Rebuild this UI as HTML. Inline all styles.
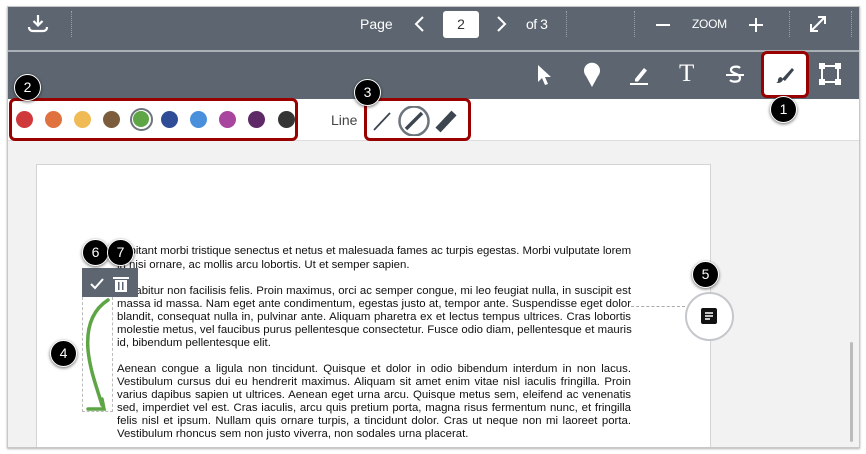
<!DOCTYPE html>
<html><head><meta charset="utf-8"><style>
*{margin:0;padding:0;box-sizing:border-box}
body{width:866px;height:454px;background:#fff;position:relative;overflow:hidden;font-family:"Liberation Sans",sans-serif}
.a{position:absolute}
.frame{left:7px;top:6px;width:853px;height:442px;background:#f2f2f2;border:1px solid #c8c8c8;overflow:hidden;box-shadow:0 1px 2px rgba(0,0,0,.3)}
.tb1{left:0;top:0;width:853px;height:43px;background:#5d6670}
.sep{left:0;top:43px;width:853px;height:2px;background:#aab0b5}
.tb2{left:0;top:45px;width:853px;height:47px;background:#5d6670}
.row{left:0;top:92px;width:853px;height:42px;background:#fff;border-bottom:1px solid #ddd}
.dv{width:0;height:26px;border-left:1px dotted #9aa1a8}
.w{color:#fff;font-size:14px}
.dot{width:17px;height:17px;border-radius:50%;top:111px}
.badge{width:27px;height:27px;border-radius:50%;background:#000;color:#fff;font-size:14px;text-align:center;line-height:25px;border:1.5px solid #fff;box-shadow:0 1px 3px rgba(0,0,0,.6)}
.red{border:3px solid #990000;border-radius:6px}
.page{left:28px;top:157px;width:675px;height:300px;background:#fff;border:1px solid #d4d4d4}
.ln{left:117px;width:514px;font-size:11.4px;line-height:13px;height:13px;color:#111;text-align:justify;text-align-last:justify;white-space:nowrap;overflow:visible}
.nl{text-align-last:left}
</style></head><body>
<div class="a frame"></div>
<div class="a" style="left:8px;top:7px;width:851px;height:440px;overflow:hidden">
 <div class="a tb1"></div><div class="a sep"></div><div class="a tb2"></div><div class="a row"></div>
 <div class="a page"></div>
 <div class="a" style="left:842px;top:335px;width:3px;height:100px;background:#bbb;border-radius:2px"></div>
</div>
<svg class="a" style="left:27px;top:14px" width="22" height="20" viewBox="0 0 22 20"><path d="M11 1v10M6.5 7l4.5 4.5L15.5 7" stroke="#fff" stroke-width="2.2" fill="none"/><path d="M2 13c0 3 2 4 4 4h10c2 0 4-1 4-4" stroke="#fff" stroke-width="2.2" fill="none"/></svg>
<div class="a dv" style="left:71px;top:11px"></div>
<div class="a w" style="left:360px;top:16px">Page</div>
<svg class="a" style="left:413px;top:15px" width="12" height="18"><path d="M10 2L3 9l7 7" stroke="#fff" stroke-width="2" fill="none"/></svg>
<div class="a" style="left:443px;top:11px;width:36px;height:27px;background:#fff;border-radius:3px;text-align:center;line-height:27px;font-size:14px;color:#333">2</div>
<svg class="a" style="left:496px;top:15px" width="12" height="18"><path d="M2 2l7 7-7 7" stroke="#fff" stroke-width="2" fill="none"/></svg>
<div class="a w" style="left:526px;top:16px;letter-spacing:-.5px">of 3</div>
<div class="a dv" style="left:566px;top:11px"></div>
<div class="a dv" style="left:634px;top:11px"></div>
<div class="a" style="left:656px;top:24px;width:14px;height:2px;background:#fff"></div>
<div class="a" style="left:692px;top:17px;color:#fff;font-size:12px;letter-spacing:-.3px">ZOOM</div>
<div class="a" style="left:749px;top:24px;width:14px;height:2px;background:#fff"></div>
<div class="a" style="left:755px;top:18px;width:2px;height:14px;background:#fff"></div>
<div class="a dv" style="left:789px;top:11px"></div>
<svg class="a" style="left:808px;top:14px" width="20" height="20"><path d="M3 17L17 3M10 3h7v7M3 10v7h7" stroke="#fff" stroke-width="2" fill="none"/></svg>
<div class="a dv" style="left:851px;top:11px"></div>
<svg class="a" style="left:535px;top:63px" width="16" height="24"><path d="M3 2v17l4-4 3 7 3-1-3-7h6z" fill="#fff"/></svg>
<svg class="a" style="left:582px;top:61px" width="20" height="28"><path d="M10 26L4 15A8 8 0 1 1 16 15z" fill="#fff"/></svg>
<svg class="a" style="left:628px;top:63px" width="22" height="24"><path d="M7 16l9-11 3 2.5-9 11H7z" fill="#fff"/><rect x="2" y="20" width="18" height="2" fill="#fff"/></svg>
<div class="a" style="left:679px;top:60px;color:#fff;font-family:'Liberation Serif',serif;font-size:25px">T</div>
<svg class="a" style="left:725px;top:63px" width="20" height="24"><path d="M15 5c-2-2-9-2-9 2s9 3 9 8-8 4-10 2" stroke="#fff" stroke-width="2.2" fill="none"/><rect x="1" y="11" width="18" height="2" fill="#fff"/></svg>
<div class="a red" style="left:761px;top:51px;width:48px;height:47px;background:#fff"></div>
<svg class="a" style="left:773px;top:65px" width="22" height="20"><path d="M9 14l10-11 2 2-9 11z" fill="#3d4650"/><path d="M2 18c2 0 3-1 3-3 0-2 2-3 3-3l2 2c0 2-2 4-5 4z" fill="#3d4650"/></svg>
<svg class="a" style="left:819px;top:63px" width="22" height="22"><rect x="3" y="3" width="16" height="16" fill="none" stroke="#fff" stroke-width="2"/><g fill="#fff"><rect x="0" y="0" width="6" height="6"/><rect x="16" y="0" width="6" height="6"/><rect x="0" y="16" width="6" height="6"/><rect x="16" y="16" width="6" height="6"/></g></svg>
<div class="a badge" style="left:770px;top:96px">1</div>
<div class="a red" style="left:9px;top:98px;width:289px;height:43px"></div>
<div class="a dot" style="left:16px;background:#d0393c"></div>
<div class="a dot" style="left:45px;background:#e0723f"></div>
<div class="a dot" style="left:74px;background:#f0bb55"></div>
<div class="a dot" style="left:103px;background:#7d5c3e"></div>
<div class="a" style="left:130px;top:108px;width:23px;height:23px;border-radius:50%;border:2.5px solid #6c747c;background:#fff;padding:1px"><div style="width:16px;height:16px;border-radius:50%;background:#5da545"></div></div>
<div class="a dot" style="left:161px;background:#2f4d97"></div>
<div class="a dot" style="left:190px;background:#4a8fdc"></div>
<div class="a dot" style="left:219px;background:#a7459f"></div>
<div class="a dot" style="left:248px;background:#5e2966"></div>
<div class="a dot" style="left:278px;background:#353535"></div>
<div class="a badge" style="left:14px;top:74px">2</div>
<div class="a" style="left:331px;top:112px;font-size:14px;color:#444">Line</div>
<div class="a red" style="left:364px;top:98px;width:107px;height:43px"></div>
<svg class="a" style="left:372px;top:106px" width="95" height="30"><path d="M2 24L18 7" stroke="#3d4650" stroke-width="1.8"/><circle cx="42" cy="15" r="14.5" fill="none" stroke="#6c747c" stroke-width="2.5"/><path d="M34 23L50 7" stroke="#3d4650" stroke-width="3.5"/><path d="M66 24L82 7" stroke="#3d4650" stroke-width="7"/></svg>
<div class="a badge" style="left:354px;top:79px">3</div>
<div class="a ln" style="top:245px;letter-spacing:-0.06px">habitant morbi tristique senectus et netus et malesuada fames ac turpis egestas. Morbi vulputate lorem</div>
<div class="a ln nl" style="top:259px">in nisi ornare, ac mollis arcu lobortis. Ut et semper sapien.</div>
<div class="a ln" style="top:285px">Curabitur non facilisis felis. Proin maximus, orci ac semper congue, mi leo feugiat nulla, in suscipit est</div>
<div class="a ln" style="top:298px">massa id massa. Nam eget ante condimentum, egestas justo at, tempor ante. Suspendisse eget dolor</div>
<div class="a ln" style="top:311px">blandit, consequat nulla in, pulvinar ante. Aliquam pharetra ex et lectus tempus ultrices. Cras lobortis</div>
<div class="a ln" style="top:324px">molestie metus, vel faucibus purus pellentesque consectetur. Fusce odio diam, pellentesque et mauris</div>
<div class="a ln nl" style="top:337px">id, bibendum pellentesque elit.</div>
<div class="a ln" style="top:363px">Aenean congue a ligula non tincidunt. Quisque et dolor in odio bibendum interdum in non lacus.</div>
<div class="a ln" style="top:376px">Vestibulum cursus dui eu hendrerit maximus. Aliquam sit amet enim vitae nisl iaculis fringilla. Proin</div>
<div class="a ln" style="top:389px">varius dapibus sapien ut ultrices. Aenean eget urna arcu. Quisque metus sem, eleifend ac venenatis</div>
<div class="a ln" style="top:402px">sed, imperdiet vel est. Cras iaculis, arcu quis pretium porta, magna risus fermentum nunc, et fringilla</div>
<div class="a ln" style="top:415px">felis nisl et ipsum. Nullam quis ornare turpis, a tincidunt dolor. Cras ut neque non mi laoreet porta.</div>
<div class="a ln nl" style="top:428px">Vestibulum rhoncus sem non justo viverra, non sodales urna placerat.</div>
<div class="a" style="left:82px;top:297px;width:31px;height:115px;border:1px dashed #bbb;border-top:none"></div>
<svg class="a" style="left:80px;top:295px" width="40" height="120"><path d="M28 5C14 14 6 30 8 55c2 20 8 35 14 55" stroke="#5da545" stroke-width="3.5" fill="none" stroke-linecap="round"/><path d="M8 114h16l-2-10" stroke="#5da545" stroke-width="3.5" fill="none" stroke-linecap="round"/></svg>
<div class="a" style="left:82px;top:268px;width:56px;height:29px;background:#5d6670"></div>
<svg class="a" style="left:89px;top:275px" width="44" height="18"><path d="M2 9l4 4 8-9" stroke="#fff" stroke-width="2" fill="none"/><rect x="26" y="5" width="12" height="12" fill="#fff"/><rect x="24" y="2" width="16" height="2" fill="#fff"/><rect x="29" y="7" width="1.5" height="8" fill="#5d6670"/><rect x="33" y="7" width="1.5" height="8" fill="#5d6670"/></svg>
<div class="a badge" style="left:82px;top:239px">6</div>
<div class="a badge" style="left:107px;top:239px">7</div>
<div class="a badge" style="left:50px;top:340px">4</div>
<div class="a" style="left:631px;top:306px;width:54px;border-top:1px dashed #aaa"></div>
<div class="a" style="left:685px;top:292px;width:49px;height:49px;border-radius:50%;background:#fff;border:2px solid #c4c8cc"></div>
<svg class="a" style="left:701px;top:308px" width="16" height="16"><rect width="16" height="16" rx="2" fill="#111"/><path d="M4 5h8M4 8h8M4 11h5" stroke="#fff" stroke-width="1.5"/></svg>
<div class="a badge" style="left:692px;top:261px">5</div>
</body></html>
